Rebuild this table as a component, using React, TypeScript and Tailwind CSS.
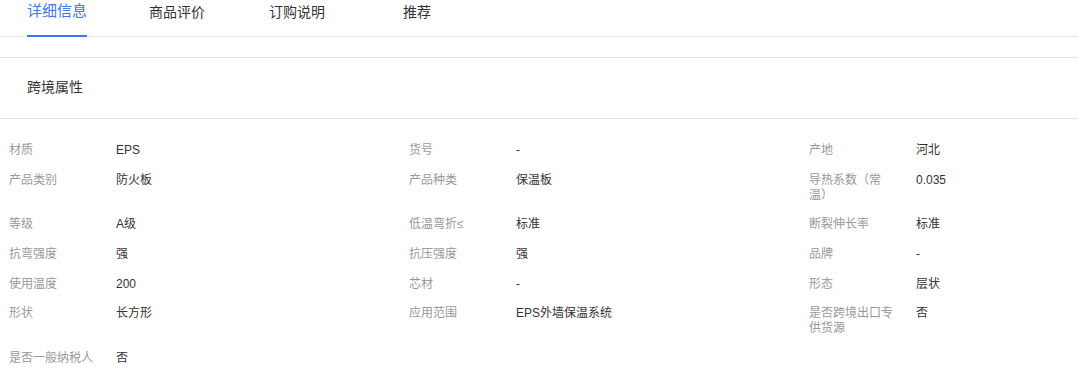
import React from "react";

const tabs = ["详细信息", "商品评价", "订购说明", "推荐"];

type Cell = [string, string];
const rows: Cell[][] = [
  [["材质", "EPS"], ["货号", "-"], ["产地", "河北"]],
  [["产品类别", "防火板"], ["产品种类", "保温板"], ["导热系数（常温）", "0.035"]],
  [["等级", "A级"], ["低温弯折≤", "标准"], ["断裂伸长率", "标准"]],
  [["抗弯强度", "强"], ["抗压强度", "强"], ["品牌", "-"]],
  [["使用温度", "200"], ["芯材", "-"], ["形态", "层状"]],
  [["形状", "长方形"], ["应用范围", "EPS外墙保温系统"], ["是否跨境出口专供货源", "否"]],
  [["是否一般纳税人", "否"]],
];

export default function App() {
  return (
    <div
      className="w-[1078px] h-[371px] overflow-hidden bg-white text-[#333]"
      style={{ fontFamily: '"Liberation Sans", "Noto Sans CJK SC", sans-serif' }}
    >
      <div className="relative h-[37px] border-b border-[#e5e5e5]">
        <div className="flex -ml-[3px] h-full">
          {tabs.map((t, i) => (
            <div key={t} className="relative w-[120px] flex justify-center h-full">
              <span
                className={
                  i === 0
                    ? "relative pt-[1px] text-[15px] leading-[20px] text-[#3c78f7] h-full"
                    : "relative pt-[2px] text-[14px] leading-[20px] text-[#333] h-full"
                }
              >
                {t}
                {i === 0 && (
                  <span className="absolute left-0 right-0 -bottom-[1px] h-[2px] bg-[#3c78f7]" />
                )}
              </span>
            </div>
          ))}
        </div>
      </div>
      <div className="h-[21px] border-b border-[#e5e5e5]" />
      <div className="h-[61px] border-b border-[#e5e5e5] pl-[27px] pt-[19px] text-[14px] leading-[20px] text-[#333]">
        跨境属性
      </div>
      <div className="pt-[17px] w-[1200px] grid grid-cols-[400px_400px_400px] text-[12px] leading-[15px]">
        {rows.map((r, ri) =>
          [0, 1, 2].map((ci) => {
            const c = r[ci];
            return (
              <div key={`${ri}-${ci}`} className="flex py-[7.3px]">
                {c && (
                  <>
                    <div className="w-[116px] shrink-0 pl-[9px] pr-[20px] text-[#999]">{c[0]}</div>
                    <div className="flex-1 text-[#333]">{c[1]}</div>
                  </>
                )}
              </div>
            );
          })
        )}
      </div>
    </div>
  );
}
